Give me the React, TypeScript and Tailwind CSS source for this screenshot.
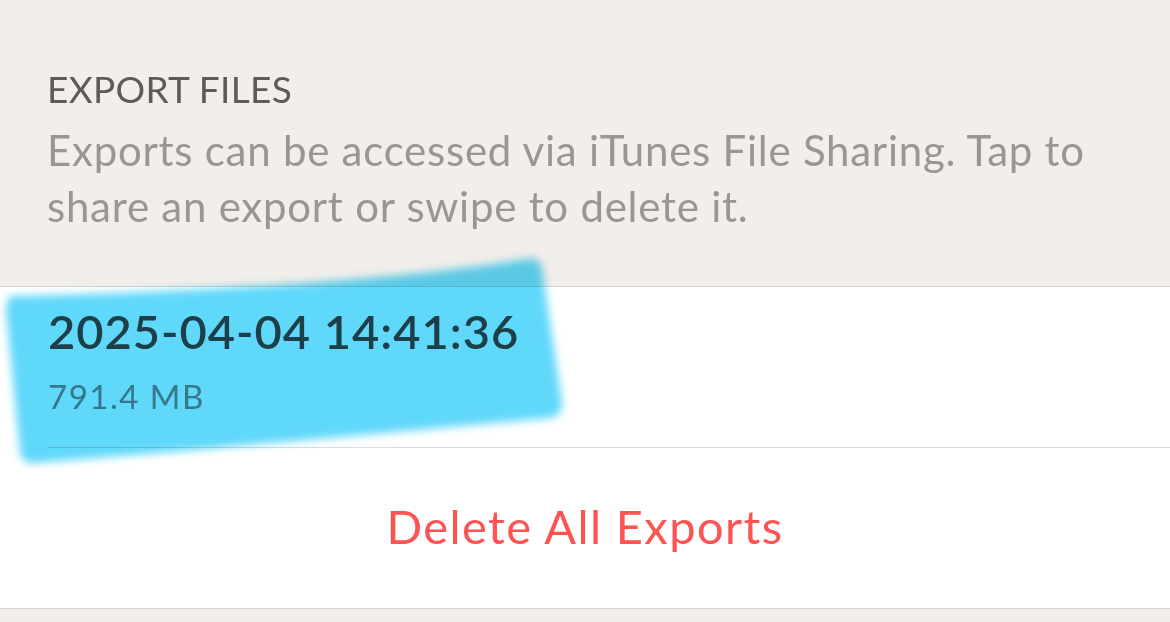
export default function App() {
  const font = { fontFamily: "Lato, 'Noto Sans', sans-serif" };

  return (
    <div className="relative w-full h-[622px] overflow-hidden bg-[#f2eeea]" style={font}>
      {/* section header */}
      <div className="h-[286px] px-[47px] pt-[69px]">
        <p className="text-[37px] leading-[40px] tracking-[0.3px] text-[#5c5b5a]">EXPORT FILES</p>
        <p className="mt-[13px] text-[42px] leading-[56px] tracking-[0.75px] text-[#9b9692]">
          Exports can be accessed via iTunes File Sharing. Tap to share an export or swipe to delete it.
        </p>
      </div>

      {/* list */}
      <div className="bg-white border-y border-[#d9d5d1]">
        <div className="h-[160px] pl-[48px] pt-[16px]">
          <p className="text-[47px] leading-[56px] font-semibold tracking-[1px] text-[#4a4a4a]">
            2025-04-04 14:41:36
          </p>
          <p className="mt-[17px] text-[33px] leading-[40px] tracking-[1.5px] text-[#8e8e8e]">791.4 MB</p>
        </div>
        <div className="ml-[48px] border-t border-[#dcdcdc]" />
        <div className="h-[160px] pb-1 flex items-center justify-center">
          <span className="text-[47px] leading-[56px] tracking-[1.4px] text-[#fe5352]">Delete All Exports</span>
        </div>
      </div>

      {/* highlighter stroke over the first row */}
      <svg
        className="absolute left-0 top-[240px] mix-blend-multiply pointer-events-none"
        width="600"
        height="250"
        viewBox="0 0 600 250"
      >
        <defs>
          <filter id="soft" x="-10%" y="-10%" width="120%" height="120%">
            <feGaussianBlur stdDeviation="4" />
          </filter>
        </defs>
        <path
          d="M 8 60 Q 6 56 16 56 C 200 52 400 40 526 19 Q 540 16 542 28 L 562 163 Q 563 175 550 178 C 400 192 200 210 35 223 Q 22 224 20 212 L 6 70 Z"
          fill="#60d8fa"
          filter="url(#soft)"
        />
      </svg>
    </div>
  );
}
